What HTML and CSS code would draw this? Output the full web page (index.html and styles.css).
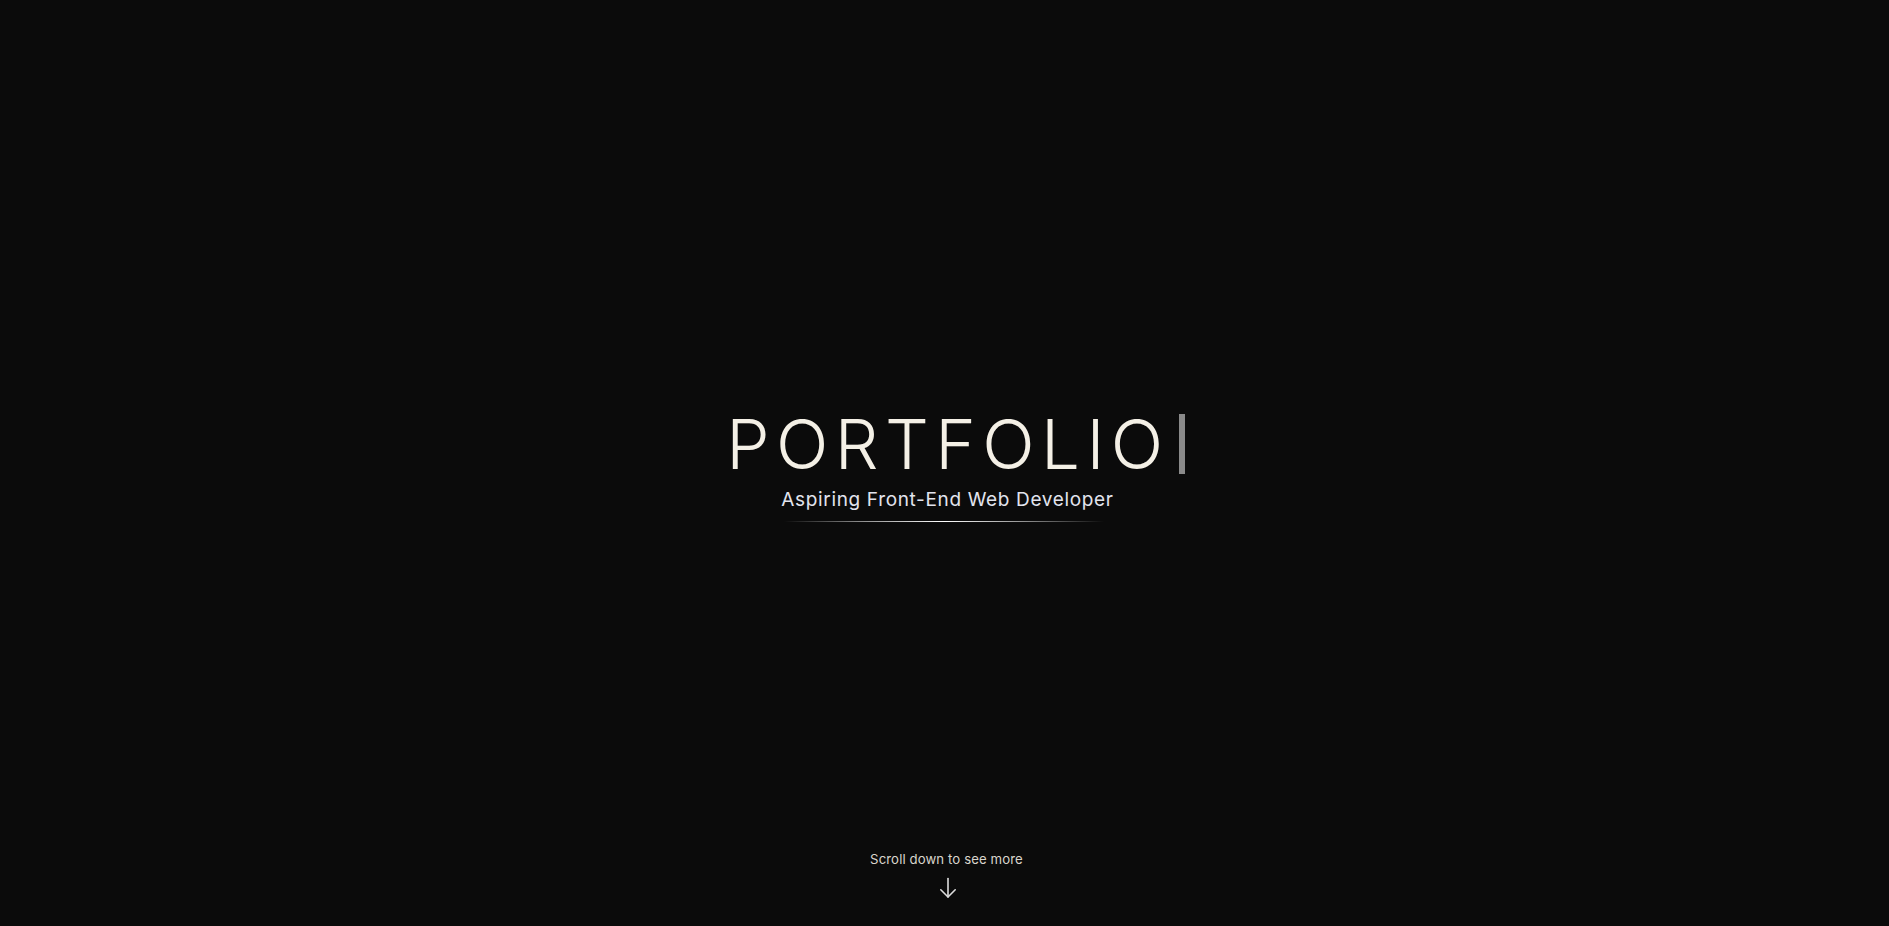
FILE: index.html
```html
<!DOCTYPE html>
<html lang="en">
<head>
<meta charset="utf-8">
<title>Portfolio</title>
<link rel="stylesheet" href="styles.css">
</head>
<body>
<main class="page">
  <section class="hero">
    <div class="hero-inner">
      <h1 class="title"><span class="title-text">PORTFOLIO</span><span class="cursor"></span></h1>
      <p class="subtitle">Aspiring Front-End Web Developer</p>
      <div class="divider"></div>
    </div>
  </section>
  <footer class="scroll-hint">
    <span class="scroll-text">Scroll down to see more</span>
    <svg class="scroll-arrow" width="18" height="22" viewBox="0 0 18 22" fill="none" stroke="currentColor" stroke-width="1.6" stroke-linecap="round" stroke-linejoin="round">
      <path d="M9 1.5V20"/>
      <path d="M1.8 12.8L9 20l7.2-7.2"/>
    </svg>
  </footer>
</main>
</body>
</html>
```
FILE: styles.css
```css
* { box-sizing: border-box; }
html, body {
  margin: 0;
  padding: 0;
  height: 100%;
  background: #0b0b0b;
}
body {
  font-family: Inter, "Noto Sans", sans-serif;
  color: #f3efe6;
}
.page {
  height: 100vh;
  display: flex;
  flex-direction: column;
}
.hero {
  flex: 1;
  display: flex;
  align-items: center;
  justify-content: center;
}
.hero-inner {
  display: flex;
  flex-direction: column;
  align-items: center;
  margin-top: 79px;
}
.title {
  margin: 0;
  display: flex;
  align-items: center;
  font-weight: 300;
  font-size: 69px;
  line-height: 1;
  letter-spacing: 6.4px;
  color: #f4f0e6;
  padding-left: 22px;
}
.cursor {
  display: block;
  width: 6px;
  height: 60px;
  background: #8a8a8a;
  margin-left: 9px;
}
.subtitle {
  margin: 10px 0 0;
  padding-left: 6px;
  font-size: 19px;
  line-height: 1.2;
  font-weight: 400;
  letter-spacing: 0.65px;
  color: #e2e4ee;
}
.divider {
  margin-top: 10px;
  width: 320px;
  height: 1px;
  background: linear-gradient(90deg, rgba(255,255,255,0) 0%, rgba(255,255,255,0.55) 25%, #ffffff 50%, rgba(255,255,255,0.55) 75%, rgba(255,255,255,0) 100%);
}
.scroll-hint {
  display: flex;
  flex-direction: column;
  align-items: center;
  padding-bottom: 27px;
  color: #d9d5cc;
}
.scroll-text {
  font-size: 13.2px;
  line-height: 1;
  letter-spacing: 0.1px;
  padding-left: 4px;
}
.scroll-arrow {
  margin-top: 11px;
  margin-left: 6px;
  color: #dddddd;
}
```
